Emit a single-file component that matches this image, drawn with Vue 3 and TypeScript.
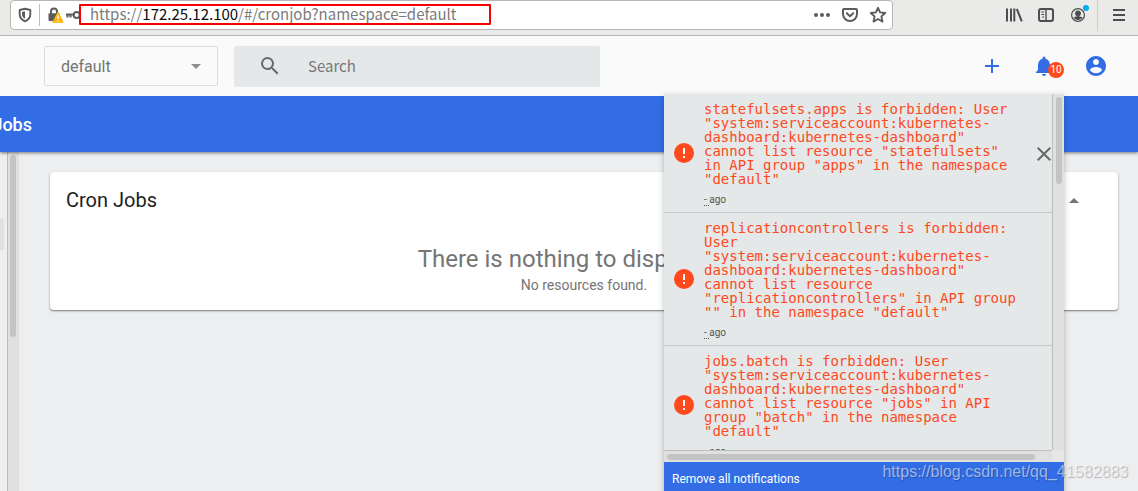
<script setup lang="ts">
import { ref } from 'vue'

interface Notification {
  id: number
  message: string
  closable: boolean
}

const namespace = ref<string>('default')
const query = ref<string>('')

const account = '"system:serviceaccount:kubernetes-dashboard:kubernetes-dashboard"'
const forbidden = (name: string, resource: string, group: string): string =>
  `${name} is forbidden: User ${account} cannot list resource "${resource}" in API group "${group}" in the namespace "default"`

const notifications = ref<Notification[]>([
  { id: 1, message: forbidden('statefulsets.apps', 'statefulsets', 'apps'), closable: true },
  { id: 2, message: forbidden('replicationcontrollers', 'replicationcontrollers', ''), closable: false },
  { id: 3, message: forbidden('jobs.batch', 'jobs', 'batch'), closable: false },
])

function remove(id: number): void {
  notifications.value = notifications.value.filter((n) => n.id !== id)
}
</script>

<template>
  <div class="page">
    <div class="browser">
      <div class="urlbar">
        <svg class="shield" width="16" height="16" viewBox="0 0 16 16" fill="none" stroke="#5c5c5b">
          <path d="M8 1.800 13.300 3v4.600c0 3-2 5.300-5.300 6.700-3.300-1.400-5.300-3.700-5.300-6.700V3Z" stroke-width="1.900" stroke-linejoin="round" />
          <path d="M8 4.300v7.500c-2-1-3-2.400-3-4.300V5Z" fill="#5c5c5b" stroke="none" />
        </svg>
        <span class="bar-divider"></span>
        <svg class="lock" width="18" height="18" viewBox="0 0 18 18">
          <path d="M5 8V5.500a3 3 0 0 1 6 0V8" fill="none" stroke="#5c5c5b" stroke-width="2" />
          <rect x="2.500" y="7.300" width="11" height="7.700" rx="1" fill="#5c5c5b" />
          <path d="M12 6.600 17 16.200H7Z" fill="#ffb30f" stroke="#ffb30f" stroke-width="1.200" stroke-linejoin="round" />
          <path d="M12 9.500v3.400M12 14.200v1.300" stroke="#fff" stroke-width="1.400" />
        </svg>
        <svg class="key" width="17" height="16" viewBox="0 0 17 16" fill="none" stroke="#5c5c5b">
          <circle cx="11.700" cy="8" r="3" stroke-width="2" />
          <path d="M1 7.500h7.700M2.500 8v2.500M5.500 8v2.500" stroke-width="2" />
        </svg>
        <div class="address" role="textbox" aria-label="Address" contenteditable="true" spellcheck="false"><span>https://</span><span class="host">172.25.12.100</span><span>/#/cronjob?namespace=default</span></div>
        <div class="url-actions">
          <button type="button" aria-label="Page actions">
            <svg width="18" height="18" viewBox="0 0 18 18" fill="#5c5c5b"><circle cx="3" cy="9" r="2" /><circle cx="9" cy="9" r="2" /><circle cx="15" cy="9" r="2" /></svg>
          </button>
          <button type="button" aria-label="Save to Pocket">
            <svg width="18" height="18" viewBox="0 0 18 18" fill="none" stroke="#5c5c5b" stroke-width="2" stroke-linejoin="round" stroke-linecap="round">
              <path d="M3 3h12a1 1 0 0 1 1 1v4a7 7 0 0 1-14 0V4a1 1 0 0 1 1-1Z" />
              <path d="M5.800 7.300 9 10.300l3.200-3" />
            </svg>
          </button>
          <button type="button" aria-label="Bookmark this page">
            <svg width="18" height="18" viewBox="0 0 18 18" fill="none" stroke="#5c5c5b" stroke-width="1.900" stroke-linejoin="round">
              <path d="m9 1.800 2.100 4.600 5.100.6-3.800 3.400 1.100 5.200L9 13l-4.500 2.600 1.100-5.200L1.800 7l5.100-.6Z" />
            </svg>
          </button>
        </div>
      </div>
      <div class="browser-tools">
        <button type="button" aria-label="Library">
          <svg width="18" height="18" viewBox="0 0 18 18" stroke="#4a4e50" stroke-width="2" fill="none"><path d="M2 2.500v13M6 2.500v13M9.300 2.500v13M11.800 3l5 12.300" /></svg>
        </button>
        <button type="button" aria-label="Sidebars">
          <svg width="18" height="18" viewBox="0 0 18 18" stroke="#4a4e50" fill="none"><rect x="2" y="3" width="14" height="12" rx="2" stroke-width="2" /><path d="M9 3v12" stroke-width="1.400" /><path d="M4.200 6h3M4.200 8.500h3M5 11h2" stroke-width="1.100" /></svg>
        </button>
        <button type="button" aria-label="Account">
          <svg width="22" height="22" viewBox="0 0 22 22" fill="none"><circle cx="11" cy="11" r="6.400" stroke="#4a4e50" stroke-width="1.200" /><circle cx="11" cy="9.300" r="2.900" fill="#4a4e50" /><path d="M6.500 13.200c1.500 0 2.500-1.300 4.500-1.300s3 1.300 4.500 1.300c-1 1.800-2.600 2.800-4.500 2.800s-3.500-1-4.500-2.800Z" fill="#4a4e50" /><circle cx="19" cy="4" r="3" fill="#00adf5" /></svg>
        </button>
        <span class="tool-divider"></span>
        <button type="button" aria-label="Menu">
          <svg width="18" height="18" viewBox="0 0 18 18" stroke="#4a4e50" stroke-width="2"><path d="M3 4h12M3 9h12M3 14h12" /></svg>
        </button>
      </div>
      <div class="marker"></div>
    </div>

    <header class="header">
      <div class="namespace">
        <select v-model="namespace" aria-label="Namespace">
          <option value="default">default</option>
        </select>
        <svg width="10" height="5" viewBox="0 0 10 5"><path d="M0 0h10L5 5Z" fill="#8f8f8f" /></svg>
      </div>
      <label class="search">
        <svg width="24" height="24" viewBox="0 0 24 24" fill="#666a6b"><path d="M15.500 14h-.79l-.28-.27A6.470 6.470 0 0 0 16 9.500 6.500 6.500 0 1 0 9.500 16c1.610 0 3.090-.59 4.230-1.570l.27.28v.79l5 4.990L20.490 19zm-6 0C7.010 14 5 11.990 5 9.500S7.010 5 9.500 5 14 7.010 14 9.500 11.990 14 9.500 14z" /></svg>
        <input v-model="query" type="text" placeholder="Search" aria-label="Search" />
      </label>
      <div class="header-actions">
        <button type="button" aria-label="Create new resource">
          <svg width="24" height="24" viewBox="0 0 24 24" fill="#326de6"><path d="M19 13h-6v6h-2v-6H5v-2h6V5h2v6h6z" /></svg>
        </button>
        <button type="button" class="bell" aria-label="Notifications">
          <svg width="24" height="24" viewBox="0 0 24 24" fill="#326de6"><path d="M12 22c1.100 0 2-.9 2-2h-4a2 2 0 0 0 2 2zm6-6v-5c0-3.070-1.640-5.640-4.500-6.320V4a1.500 1.500 0 0 0-3 0v.68C7.630 5.360 6 7.920 6 11v5l-2 2v1h16v-1z" /></svg>
          <span class="badge">10</span>
        </button>
        <button type="button" aria-label="User">
          <svg width="24" height="24" viewBox="0 0 24 24" fill="#326de6"><path d="M12 2C6.480 2 2 6.480 2 12s4.480 10 10 10 10-4.480 10-10S17.520 2 12 2zm0 3c1.660 0 3 1.340 3 3s-1.340 3-3 3-3-1.340-3-3 1.340-3 3-3zm0 14.200a7.200 7.200 0 0 1-6-3.220c.03-1.990 4-3.080 6-3.080 1.990 0 5.970 1.090 6 3.080a7.200 7.200 0 0 1-6 3.220z" /></svg>
        </button>
      </div>

      <section class="panel" aria-label="Notifications">
        <div class="panel-body">
          <ul class="list">
            <li v-for="n in notifications" :key="n.id" class="item">
              <svg class="error" width="24" height="24" viewBox="0 0 24 24"><circle cx="12" cy="12" r="10" fill="#ff481c" /><path d="M11 7h2v6h-2zM11 15h2v2h-2z" fill="#fff" /></svg>
              <div class="detail">
                <div class="message">{{ n.message }}</div>
                <div class="time"><span class="stamp">-&nbsp;</span>ago</div>
              </div>
              <button v-if="n.closable" type="button" class="close" aria-label="Dismiss" @click="remove(n.id)">
                <svg width="24" height="24" viewBox="0 0 24 24" fill="#666a6b"><path d="M19 6.410 17.590 5 12 10.590 6.410 5 5 6.410 10.590 12 5 17.590 6.410 19 12 13.410 17.590 19 19 17.590 13.410 12z" /></svg>
              </button>
              <span v-else class="close"></span>
            </li>
          </ul>
          <div class="vtrack"><span class="vthumb"></span></div>
          <div class="htrack"><span class="hthumb"></span></div>
          <div class="corner"></div>
        </div>
        <button type="button" class="clear">Remove all notifications</button>
      </section>
    </header>

    <div class="titlebar"><span class="crumb">Jobs</span></div>

    <div class="body">
      <aside class="side"><span class="side-item"></span></aside>
      <div class="side-track"><span class="side-thumb"></span></div>
      <main class="main">
        <section class="card">
          <div class="card-head">
            <h2>Cron Jobs</h2>
            <button type="button" aria-label="Collapse">
              <svg width="10" height="5" viewBox="0 0 10 5"><path d="M0 5h10L5 0Z" fill="#757575" /></svg>
            </button>
          </div>
          <div class="empty">
            <p class="empty-title">There is nothing to display here</p>
            <p class="empty-text">No resources found.</p>
          </div>
        </section>
      </main>
    </div>

    <div class="watermark">https://blog.csdn.net/qq_41582883</div>
  </div>
</template>

<style>
body {
  margin: 0;
}
</style>

<style scoped>
* {
  box-sizing: border-box;
}
.page {
  position: relative;
  display: flex;
  flex-direction: column;
  height: 100vh;
  overflow: hidden;
  background: #edeef0;
  font-family: Roboto, "Liberation Sans", sans-serif;
}
button {
  display: flex;
  align-items: center;
  justify-content: center;
  padding: 0;
  border: 0;
  background: none;
  font-family: inherit;
  cursor: pointer;
}
svg {
  display: block;
  flex: none;
}

/* Browser toolbar */
.browser {
  position: relative;
  display: flex;
  flex: none;
  height: 36px;
  padding-left: 10px;
  background: #eaeae8;
  border-bottom: 1px solid #b6b6b2;
}
.urlbar {
  display: flex;
  flex: 1;
  align-items: center;
  height: 30px;
  padding: 0 0 0 6px;
  background: #fff;
  border: 1px solid #b6b6b2;
  border-radius: 4px;
}
.bar-divider {
  width: 1px;
  height: 22px;
  margin: 0 6px;
  background: #bdbdbb;
}
.key {
  margin: 0 8px 0 1px;
}
.address {
  flex: 1;
  padding-bottom: 2px;
  color: #7b7b7b;
  font: 15px/20px "Noto Sans CJK SC", sans-serif;
  white-space: nowrap;
  outline: 0;
}
.host {
  color: #0c0c0d;
}
.url-actions {
  display: flex;
}
.url-actions button {
  width: 28px;
  height: 28px;
}
.browser-tools {
  display: flex;
  align-items: center;
  justify-content: flex-end;
  width: 245px;
  height: 30px;
  padding-right: 3px;
}
.browser-tools button {
  width: 32px;
  height: 30px;
}
.tool-divider {
  width: 1px;
  height: 32px;
  margin: 0 5px 0 3px;
  background: #cfcfcd;
}
.marker {
  position: absolute;
  top: 4px;
  left: 79px;
  width: 412px;
  height: 21px;
  border: 2px solid #f80000;
  border-radius: 1px;
  pointer-events: none;
}

/* Application header */
.header {
  position: relative;
  z-index: 2;
  display: flex;
  flex: none;
  align-items: center;
  gap: 16px;
  height: 60px;
  padding: 0 22px 0 44px;
  background: #fafafa;
}
.namespace {
  display: grid;
  flex: none;
  align-items: center;
  width: 174px;
}
.namespace select,
.namespace svg {
  grid-area: 1 / 1;
}
.namespace select {
  height: 40px;
  padding: 2px 16px 0;
  appearance: none;
  background: transparent;
  border: 1px solid #dcdcdc;
  border-radius: 2px;
  color: #757575;
  font: 16px/20px Roboto, sans-serif;
}
.namespace svg {
  justify-self: end;
  margin-right: 17px;
  pointer-events: none;
}
.search {
  display: flex;
  flex: 0 1 366px;
  align-items: center;
  gap: 26px;
  height: 41px;
  padding: 0 24px;
  background: #e4e8e9;
  border-radius: 2px;
}
.search input {
  flex: 1;
  min-width: 0;
  padding: 0;
  background: none;
  border: 0;
  outline: 0;
  color: #333;
  font: 15px/20px "Noto Sans CJK SC", sans-serif;
}
.search input::placeholder {
  color: #777;
  opacity: 1;
}
.header-actions {
  display: flex;
  gap: 12px;
  margin-left: auto;
}
.header-actions button {
  position: relative;
  width: 40px;
  height: 40px;
}
.badge {
  position: absolute;
  top: 16px;
  left: 24px;
  width: 16px;
  height: 16px;
  background: #ff481c;
  border-radius: 50%;
  color: #fff;
  font-size: 10px;
  line-height: 16px;
  text-align: center;
}

/* Notification menu */
.panel {
  position: absolute;
  top: 58px;
  right: 74px;
  width: 400px;
  background: #e4e8e9;
  box-shadow: 0 2px 6px rgba(0, 0, 0, 0.25);
}
.panel-body {
  display: grid;
  grid-template-columns: 1fr 12px;
  grid-template-rows: 356px 12px;
}
.list {
  min-width: 0;
  margin: 0;
  padding: 0;
  overflow: hidden;
  list-style: none;
}
.item {
  display: flex;
  align-items: center;
  padding-left: 8px;
  border-bottom: 1px solid #c6cacb;
}
.detail {
  flex: none;
  width: 316px;
  margin: 0 12px 0 8px;
  padding: 8px 0 6px;
}
.message {
  color: #ff481c;
  font: 14px/14px "DejaVu Sans Mono", monospace;
}
.time {
  margin-top: 8px;
  color: #555;
  font-size: 10px;
  line-height: 12px;
}
.stamp {
  border-bottom: 1px dotted #555;
}
.close {
  flex: none;
  width: 24px;
  padding-top: 2px;
}
.vtrack {
  display: flex;
  justify-content: center;
  padding-top: 3px;
  background: #e0e0de;
  border-left: 1px solid #bcbfbd;
}
.vthumb {
  width: 6px;
  height: 87px;
  background: #c3c4c3;
  border-radius: 3px;
}
.htrack {
  display: flex;
  align-items: center;
  padding: 0 17px 0 3px;
  background: #e0e0de;
  border-top: 1px solid #bcbfbd;
}
.hthumb {
  flex: 1;
  height: 6px;
  background: #c3c4c3;
  border-radius: 3px;
}
.corner {
  background: #e6e6e4;
}
.clear {
  justify-content: flex-start;
  width: 100%;
  height: 34px;
  padding: 0 8px;
  background: #326de6;
  color: #fff;
  font-size: 12px;
  line-height: 16px;
}

/* Title bar and content */
.titlebar {
  position: relative;
  z-index: 1;
  display: flex;
  flex: none;
  align-items: center;
  height: 56px;
  padding-top: 2px;
  background: #326de6;
  box-shadow: 0 1px 3px rgba(0, 0, 0, 0.5);
}
.crumb {
  display: flex;
  justify-content: flex-end;
  width: 32px;
  overflow: hidden;
  color: #fff;
  font-size: 18px;
  font-weight: 500;
  line-height: 24px;
}
.body {
  display: flex;
  flex: 1;
}
.side {
  width: 8px;
  padding-top: 66px;
  border-right: 1px solid #bcbcba;
}
.side-item {
  display: block;
  width: 4px;
  height: 32px;
  background: #e0e0e0;
  border-radius: 0 2px 2px 0;
}
.side-track {
  width: 11px;
  padding: 3px 2px;
  background: #e0e0de;
}
.side-thumb {
  display: block;
  width: 6px;
  height: 182px;
  background: #c3c4c3;
  border-radius: 3px;
}
.main {
  flex: 1;
  padding: 20px 20px 20px 31px;
}
.card {
  background: #fff;
  border-radius: 4px;
  box-shadow: 0 1px 2px rgba(0, 0, 0, 0.5);
}
.card-head {
  display: flex;
  align-items: center;
  justify-content: space-between;
  height: 56px;
  padding: 0 24px 0 16px;
}
.card-head h2 {
  margin: 0;
  color: #212121;
  font-size: 20px;
  font-weight: 400;
  line-height: 24px;
}
.card-head button {
  width: 40px;
  height: 40px;
}
.empty {
  padding: 16px 16px 14px;
  color: #757575;
  text-align: center;
}
.empty p {
  margin: 0;
}
.empty-title {
  font-size: 24px;
  line-height: 30px;
}
.empty-text {
  font-size: 14px;
  line-height: 22px;
}
.watermark {
  position: absolute;
  right: 10px;
  bottom: 9px;
  z-index: 3;
  color: rgba(255, 255, 255, 0.55);
  font: 16px/20px "Liberation Sans", sans-serif;
  text-shadow: 1px 1px 1px rgba(0, 0, 0, 0.25);
  pointer-events: none;
}
</style>
